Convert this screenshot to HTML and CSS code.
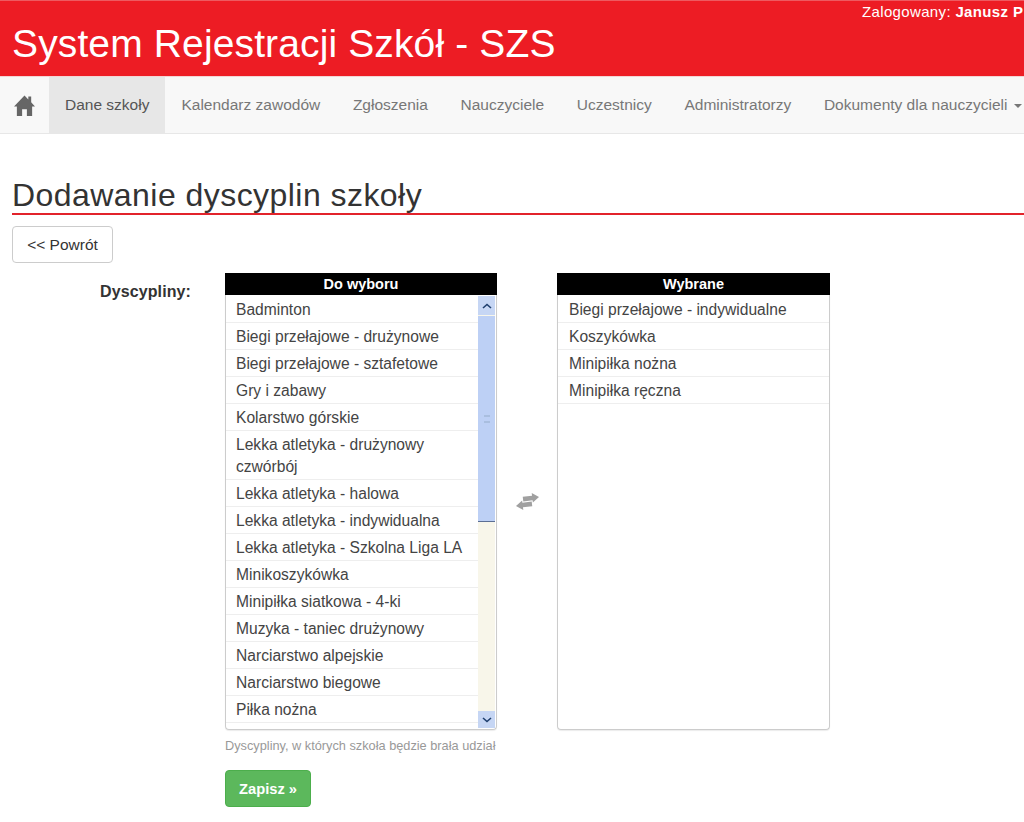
FILE: index.html
```html
<!DOCTYPE html>
<html lang="pl">
<head>
<meta charset="utf-8">
<title>System Rejestracji Szkół - SZS</title>
<link rel="stylesheet" href="styles.css">
</head>
<body>
<header class="top">
  <div class="user">Zalogowany: <b>Janusz P</b></div>
  <h1 class="brand">System Rejestracji Szkół - SZS</h1>
</header>
<nav class="nav">
  <a class="home"><svg width="21" height="21" viewBox="0 0 22 20" preserveAspectRatio="none"><path fill="#666" d="M11 0.5 L15 4.2 V1.5 H18 V7 L22 11 H19 V20 H13.5 V13.5 H8.5 V20 H3 V11 H0 Z"/></svg></a>
  <a class="item active">Dane szkoły</a>
  <a class="item">Kalendarz zawodów</a>
  <a class="item">Zgłoszenia</a>
  <a class="item">Nauczyciele</a>
  <a class="item">Uczestnicy</a>
  <a class="item">Administratorzy</a>
  <a class="item">Dokumenty dla nauczycieli <span class="caret"></span></a>
</nav>
<main class="main">
  <h2 class="title">Dodawanie dyscyplin szkoły</h2>
  <button class="back">&lt;&lt; Powrót</button>
  <div class="form">
    <div class="label">Dyscypliny:</div>
    <div class="field">
      <div class="picker">
        <section class="col">
          <div class="head">Do wyboru</div>
          <div class="box">
            <ul class="list">
              <li>Badminton</li>
              <li>Biegi przełajowe - drużynowe</li>
              <li>Biegi przełajowe - sztafetowe</li>
              <li>Gry i zabawy</li>
              <li>Kolarstwo górskie</li>
              <li>Lekka atletyka - drużynowy czwórbój</li>
              <li>Lekka atletyka - halowa</li>
              <li>Lekka atletyka - indywidualna</li>
              <li>Lekka atletyka - Szkolna Liga LA</li>
              <li>Minikoszykówka</li>
              <li>Minipiłka siatkowa - 4-ki</li>
              <li>Muzyka - taniec drużynowy</li>
              <li>Narciarstwo alpejskie</li>
              <li>Narciarstwo biegowe</li>
              <li>Piłka nożna</li>
            </ul>
            <div class="scrollbar">
              <div class="sb-btn"><svg width="10" height="6" viewBox="0 0 10 6"><path d="M1 5 L5 1.5 L9 5" fill="none" stroke="#1f3f6e" stroke-width="1.6"/></svg></div>
              <div class="thumb"><span class="grip"></span></div>
              <div class="sb-btn sb-end"><svg width="10" height="6" viewBox="0 0 10 6"><path d="M1 1 L5 4.5 L9 1" fill="none" stroke="#1f3f6e" stroke-width="1.6"/></svg></div>
            </div>
          </div>
        </section>
        <div class="swap"><svg width="25" height="17" viewBox="0 0 24 16"><path fill="#a0a0a0" d="M8 3 H17 V0.5 L23.5 5 L17 9.5 V7.5 H8 Z M16 8.5 H7 V6.5 L0.5 11 L7 15.5 V13 H16 Z" transform="rotate(-7 12 8)"/></svg></div>
        <section class="col col-wide">
          <div class="head">Wybrane</div>
          <div class="box">
            <ul class="list list-wide">
              <li>Biegi przełajowe - indywidualne</li>
              <li>Koszykówka</li>
              <li>Minipiłka nożna</li>
              <li>Minipiłka ręczna</li>
            </ul>
          </div>
        </section>
      </div>
      <p class="help">Dyscypliny, w których szkoła będzie brała udział</p>
      <button class="save">Zapisz »</button>
    </div>
  </div>
</main>
</body>
</html>
```
FILE: styles.css
```css
* { box-sizing: border-box; }
html, body { margin: 0; height: 822px; overflow: hidden; background: #fff; }
body { font-family: "Liberation Sans", Arial, sans-serif; color: #333; font-size: 15px; }
.top { height: 77px; background: #ed1c24; color: #fff; border-bottom: 1px solid #f3d5d5; box-shadow: inset 0 1px 0 #ee5a60; position: relative; overflow: hidden; padding: 22px 0 0 12px; }
.user { position: absolute; top: 4px; left: 862px; white-space: nowrap; font-size: 15px; letter-spacing: .35px; line-height: 16px; }
.brand { margin: 0; font-weight: 400; font-size: 39px; letter-spacing: .13px; line-height: 44px; white-space: nowrap; }
.nav { height: 57px; background: #f8f8f8; border-bottom: 1px solid #e7e7e7; display: flex; white-space: nowrap; overflow: hidden; color: #777; }
.home { width: 49px; flex: none; display: flex; align-items: center; justify-content: center; padding-right: 1px; }
.item { padding: 0 16.35px 0 16.35px; line-height: 56px; font-size: 15.5px; flex: none; }
.item.active { background: #e7e7e7; color: #555; padding: 0 15.7px 0 16px; }
.caret { display: inline-block; width: 0; height: 0; margin-left: 2px; vertical-align: middle; border-top: 4px solid #777; border-left: 4px solid transparent; border-right: 4px solid transparent; }
.main { padding: 0 0 0 12px; }
.title { margin: 43px 0 0; font-weight: 400; font-size: 32px; letter-spacing: .45px; line-height: 36px; color: #333; border-bottom: 2px solid #e2232b; height: 38px; white-space: nowrap; }
.back { display: block; margin-top: 11px; width: 101px; height: 37px; background: #fff; border: 1px solid #ccc; border-radius: 4px; font: 15.5px "Liberation Sans", Arial, sans-serif; color: #333; padding: 0; }
.form { display: flex; margin-top: 10px; }
.label { width: 180px; text-align: right; font-weight: 700; font-size: 16px; letter-spacing: .1px; padding: 9px 1px 0 0; line-height: 20px; flex: none; }
.field { margin-left: 33px; }
.picker { display: flex; }
.col { width: 272px; flex: none; }
.col-wide { width: 273px; }
.head { height: 22px; background: #000; color: #fff; text-align: center; font-weight: 700; font-size: 14.5px; line-height: 22px; }
.box { height: 435px; border: 1px solid #ccc; border-top: 0; border-radius: 0 0 4px 4px; display: flex; overflow: hidden; box-shadow: 0 1px 1px rgba(0,0,0,.08); }
.list { list-style: none; margin: 1px 0 0; padding: 0; flex: 1; min-width: 0; }
.list li { padding: 3px 10px 1px; line-height: 22px; font-size: 15.6px; border-bottom: 1px solid #eee; color: #444; }
.list-wide li { padding-left: 11px; }
.scrollbar { width: 17px; margin: 1px 1px 1px 0; flex: none; background: #f8f6ea; display: flex; flex-direction: column; }
.sb-btn { height: 19px; background: #c6d6f4; display: flex; align-items: center; justify-content: center; flex: none; }
.thumb { height: 206px; margin-top: 1px; background: #bdd0f5; border-bottom: 1px solid #5c6f94; display: flex; align-items: center; justify-content: center; }
.grip { width: 6px; height: 8px; border-top: 2px solid #a9bedf; border-bottom: 2px solid #a9bedf; }
.sb-end { margin-top: auto; height: 17px; }
.swap { width: 60px; flex: none; display: flex; align-items: center; justify-content: center; }
.help { margin: 8px 0 0; font-size: 12.75px; line-height: 16px; color: #999; white-space: nowrap; }
.save { display: block; margin-top: 16px; width: 86px; height: 37px; background: #5cb85c; border: 1px solid #4cae4c; border-radius: 4px; color: #fff; font: 700 14.7px "Liberation Sans", Arial, sans-serif; padding: 0; }
```
